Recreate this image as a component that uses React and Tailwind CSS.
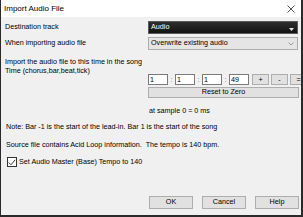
import React from 'react';

const font = { fontFamily: '"Liberation Sans", Arial, sans-serif' };

function TimeBox({ value }) {
  return (
    <div className="h-[11px] w-[20px] shrink-0 border border-[#7a7a7a] bg-white pl-[1px] leading-[9px]">
      {value}
    </div>
  );
}

function Colon() {
  return <span className="w-[7px] shrink-0 text-center leading-[11px] text-[#777]">:</span>;
}

function SmallButton({ children }) {
  return (
    <div className="flex h-[11px] w-[17px] shrink-0 items-center justify-center border border-[#adadad] bg-[#e1e1e1] leading-none">
      {children}
    </div>
  );
}

function DialogButton({ children }) {
  return (
    <div className="flex h-[13px] w-[44px] items-center justify-center border border-[#adadad] bg-[#e1e1e1]">
      {children}
    </div>
  );
}

export default function App() {
  return (
    <div
      className="flex h-[217px] w-[303px] flex-col overflow-hidden border-b-2 border-l border-r-2 border-[#2a2a2a] bg-[#f0f0f0] text-[7.2px] text-black"
      style={font}
    >
      {/* title bar */}
      <div className="flex h-[17px] shrink-0 items-center justify-between bg-white pl-[3px] pr-[4px]">
        <span className="text-[8px]">Import Audio File</span>
        <svg width="8" height="8" viewBox="0 0 8 8" className="mr-[2px]">
          <path d="M0.5 0.5 L7.5 7.5 M7.5 0.5 L0.5 7.5" stroke="#222" strokeWidth="0.8" />
        </svg>
      </div>

      <div className="flex flex-col pl-[4px]">
        {/* destination track */}
        <div className="mt-[4px] flex h-[13px] items-center">
          <span className="w-[143px]">Destination track</span>
          <div className="flex h-[13px] w-[150px] items-center justify-between border border-[#5a5a5a] bg-gradient-to-b from-[#2e2e2e] to-[#121212] pl-[2px] pr-[3px] text-white">
            <span>Audio</span>
            <svg width="5" height="4" viewBox="0 0 5 4" className="mt-[5px]">
              <path d="M0 0 H5 L2.5 3 Z" fill="#e8e8e8" />
            </svg>
          </div>
        </div>

        {/* when importing */}
        <div className="mt-[3px] flex h-[13px] items-center">
          <span className="w-[143px]">When importing audio file</span>
          <div className="flex h-[13px] w-[150px] items-center justify-between border border-[#adadad] bg-[#e5e5e5] pl-[2px] pr-[3px]">
            <span>Overwrite existing audio</span>
            <svg width="6" height="4" viewBox="0 0 6 4">
              <path d="M0.5 0.5 L3 3 L5.5 0.5" stroke="#777" strokeWidth="0.7" fill="none" />
            </svg>
          </div>
        </div>

        <div className="mt-[8px] h-[8px] leading-[8px]">Import the audio file to this time in the song</div>

        {/* time row */}
        <div className="mt-[1px] flex">
          <span className="h-[8px] w-[143px] shrink-0 leading-[8px]">Time (chorus,bar,beat,tick)</span>
          <div className="mt-[7px] flex w-[152px] shrink-0 flex-col">
            <div className="flex items-center">
              <TimeBox value="1" />
              <Colon />
              <TimeBox value="1" />
              <Colon />
              <TimeBox value="1" />
              <Colon />
              <TimeBox value="49" />
              <div className="ml-[3px] flex shrink-0 gap-[2px]">
                <SmallButton>+</SmallButton>
                <SmallButton>-</SmallButton>
                <SmallButton>=</SmallButton>
              </div>
            </div>
            <div className="mt-[2px] flex h-[11px] w-[151px] items-center justify-center border border-[#adadad] bg-[#e1e1e1]">
              Reset to Zero
            </div>
          </div>
        </div>

        <div className="mt-[9px] h-[8px] pl-[144px] leading-[8px]">at sample 0 = 0 ms</div>

        <div className="mt-[8px] h-[8px] pl-[1px] leading-[8px]">
          Note: Bar -1 is the start of the lead-in. Bar 1 is the start of the song
        </div>

        <div className="mt-[10px] h-[8px] pl-[1px] leading-[8px]">
          Source file contains Acid Loop information.&nbsp; The tempo is 140 bpm.
        </div>

        {/* checkbox */}
        <div className="mt-[8px] flex h-[10px] items-center pl-[2px]">
          <div className="flex h-[10px] w-[10px] items-center justify-center border border-[#333] bg-white">
            <svg width="8" height="7" viewBox="0 0 8 7">
              <path d="M0.8 3.6 L3 5.8 L7.2 0.8" stroke="#222" strokeWidth="0.9" fill="none" />
            </svg>
          </div>
          <span className="ml-[2px]">Set Audio Master (Base) Tempo to 140</span>
        </div>

        {/* buttons */}
        <div className="mt-[29px] flex gap-[9px] pl-[144px]">
          <DialogButton>OK</DialogButton>
          <DialogButton>Cancel</DialogButton>
          <DialogButton>Help</DialogButton>
        </div>
      </div>
    </div>
  );
}
